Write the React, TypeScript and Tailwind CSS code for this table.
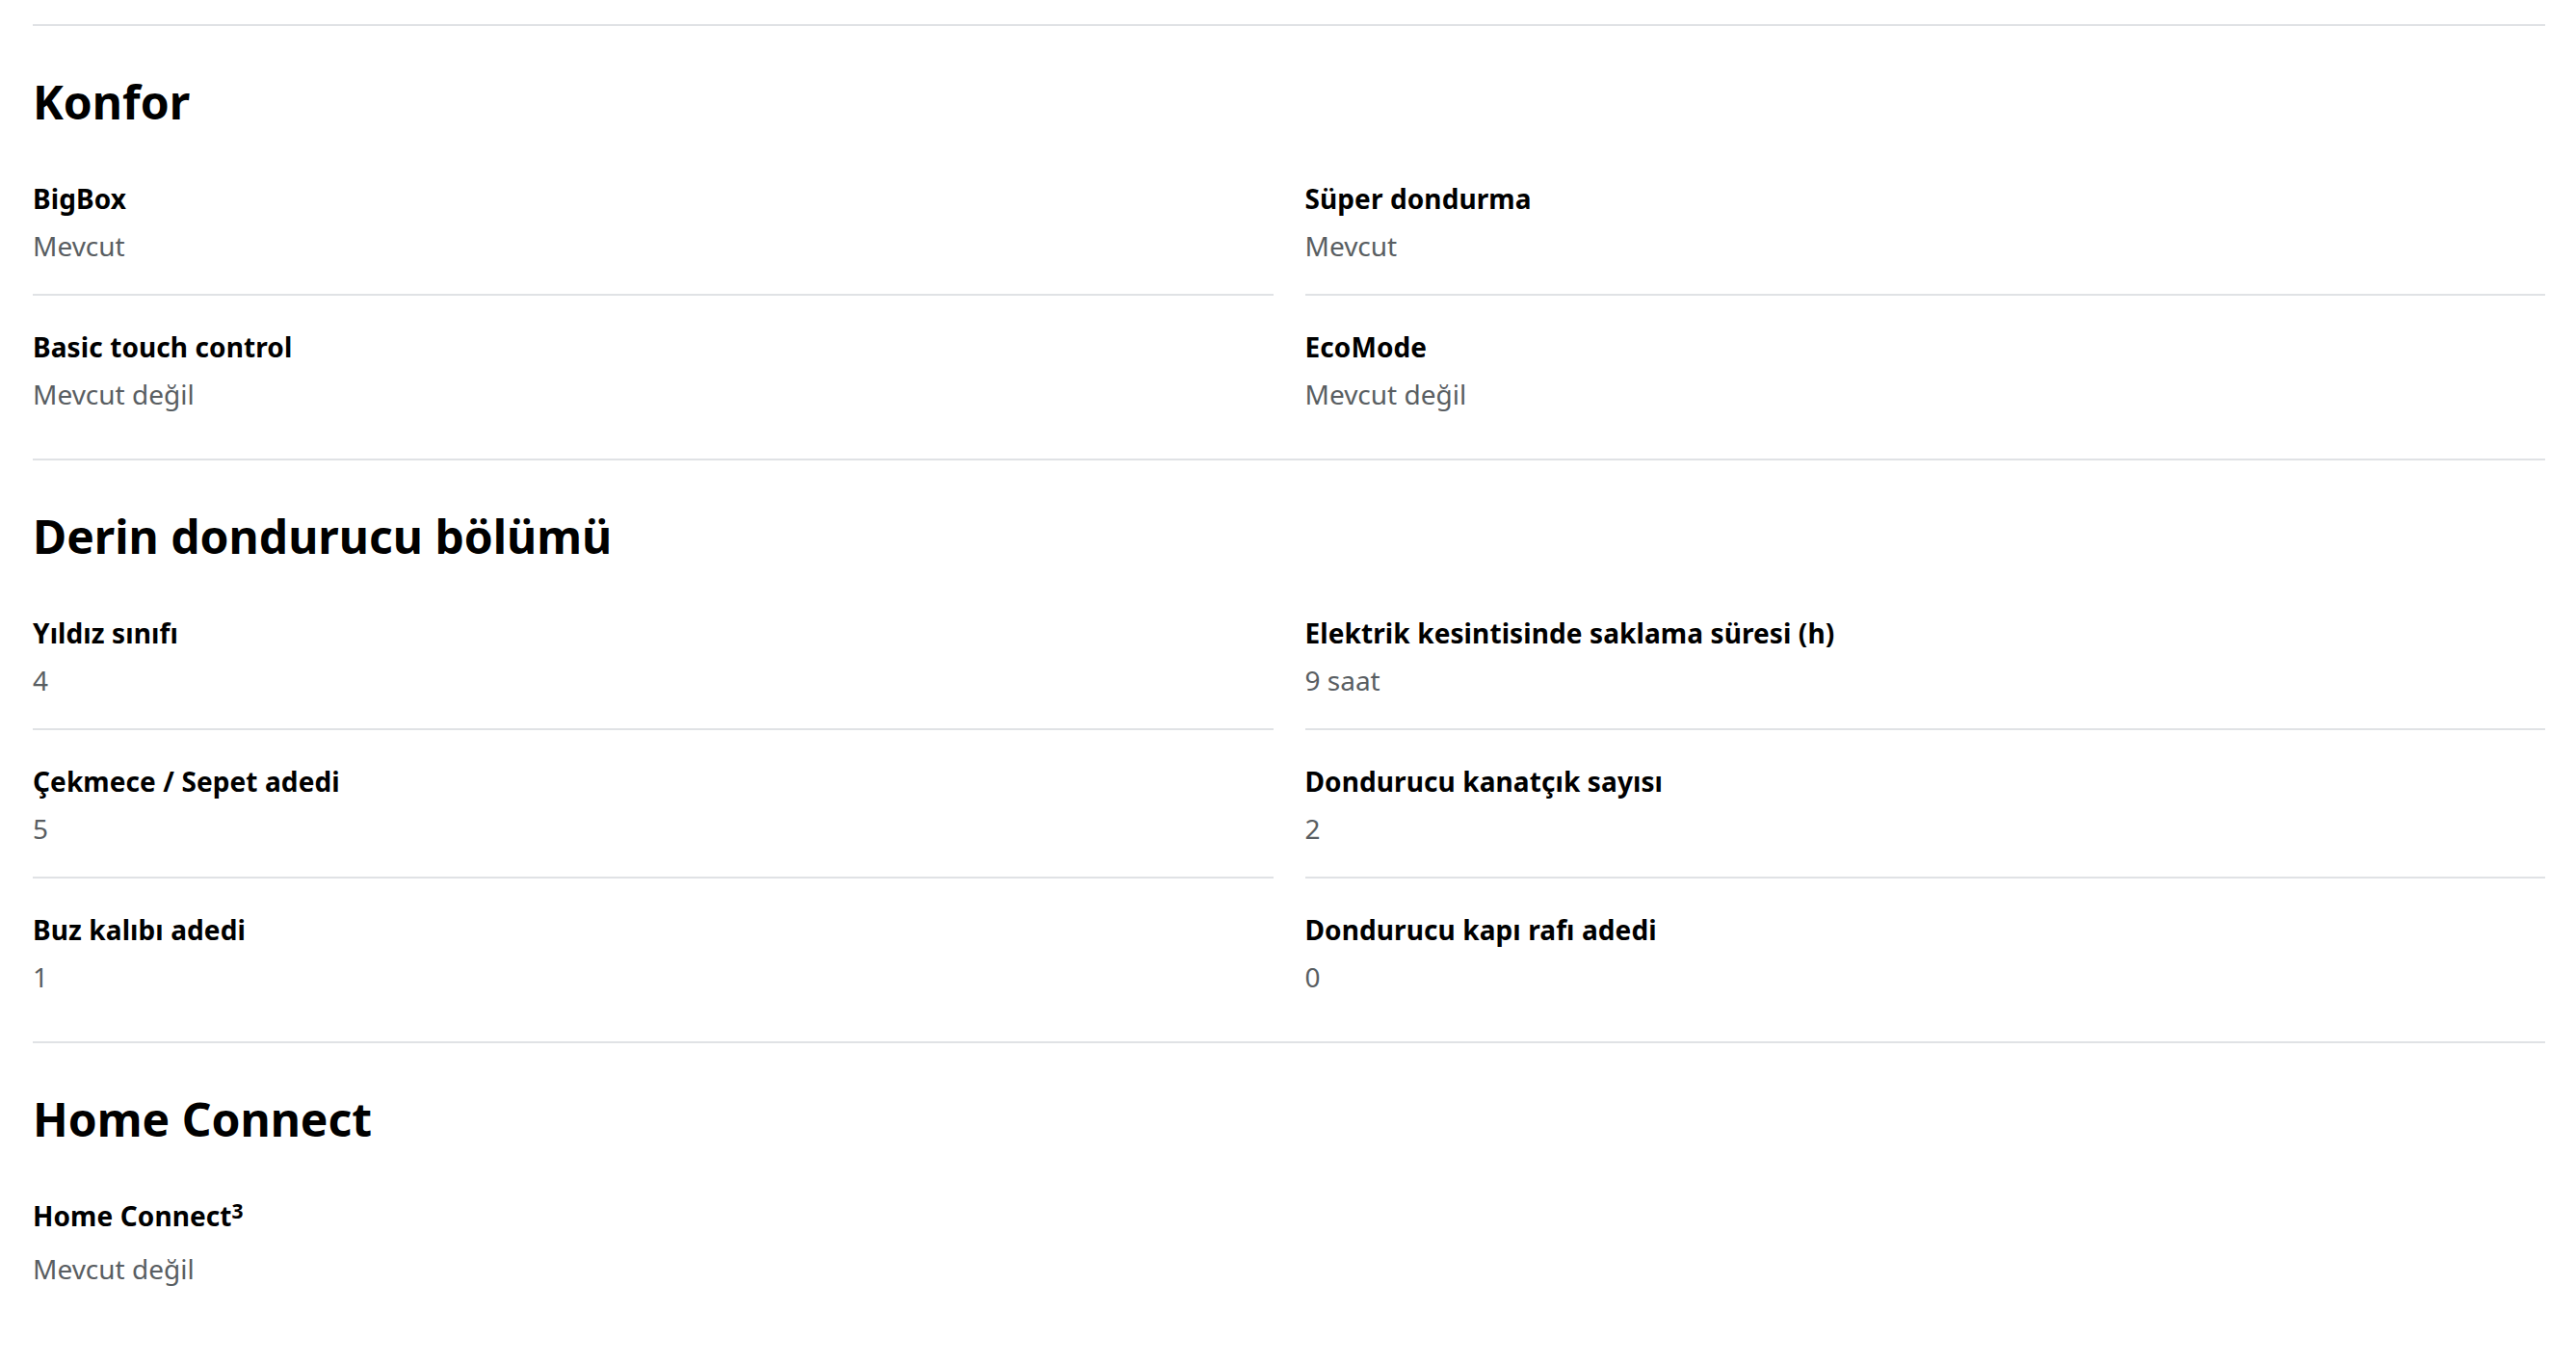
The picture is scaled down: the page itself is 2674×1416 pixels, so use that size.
import React from "react";

interface Spec {
  label: string;
  value: string;
  sup?: string;
}

interface Section {
  title: string;
  items: Spec[];
}

const SECTIONS: Section[] = [
  {
    title: "Konfor",
    items: [
      { label: "BigBox", value: "Mevcut" },
      { label: "Süper dondurma", value: "Mevcut" },
      { label: "Basic touch control", value: "Mevcut değil" },
      { label: "EcoMode", value: "Mevcut değil" },
    ],
  },
  {
    title: "Derin dondurucu bölümü",
    items: [
      { label: "Yıldız sınıfı", value: "4" },
      { label: "Elektrik kesintisinde saklama süresi (h)", value: "9 saat" },
      { label: "Çekmece / Sepet adedi", value: "5" },
      { label: "Dondurucu kanatçık sayısı", value: "2" },
      { label: "Buz kalıbı adedi", value: "1" },
      { label: "Dondurucu kapı rafı adedi", value: "0" },
    ],
  },
  {
    title: "Home Connect",
    items: [{ label: "Home Connect", sup: "3", value: "Mevcut değil" }],
  },
];

const SpecItem = ({ spec, last }: { spec: Spec; last: boolean }) => (
  <div className={last ? "pb-[30px]" : "pb-[30px] border-b-2 border-[#e0e2e5]"}>
    <div
      className={
        spec.sup
          ? "pt-[33px] text-[28px] leading-[40px] font-bold text-black tracking-[0.1px]"
          : "pt-[33px] text-[28px] leading-[40px] font-bold text-black tracking-[0.1px]"
      }
    >
      {spec.label}
      {spec.sup && <sup className="-top-[8px] text-[21px]">{spec.sup}</sup>}
    </div>
    <div
      className={
        spec.sup
          ? "mt-[15px] text-[28px] leading-[40px] text-[#595e62]"
          : "mt-[9px] text-[28px] leading-[40px] text-[#595e62]"
      }
    >
      {spec.value}
    </div>
  </div>
);

export default function App() {
  return (
    <div
      className="min-h-screen bg-white pt-[25px] pl-[34px] pr-[32px]"
      style={{ fontFamily: "'Noto Sans', Roboto, sans-serif" }}
    >
      {SECTIONS.map((section) => {
        const lastRowStart = section.items.length - (section.items.length % 2 === 0 ? 2 : 1);
        return (
          <section key={section.title} className="border-t-2 border-[#e0e2e5] pt-[50px] pb-[17px]">
            <h2 className="text-[48px] leading-[58px] font-bold text-black mb-[18px]">{section.title}</h2>
            <div className="grid grid-cols-2 gap-x-[33px]">
              {section.items.map((spec, i) => (
                <SpecItem key={spec.label} spec={spec} last={i >= lastRowStart} />
              ))}
            </div>
          </section>
        );
      })}
    </div>
  );
}
